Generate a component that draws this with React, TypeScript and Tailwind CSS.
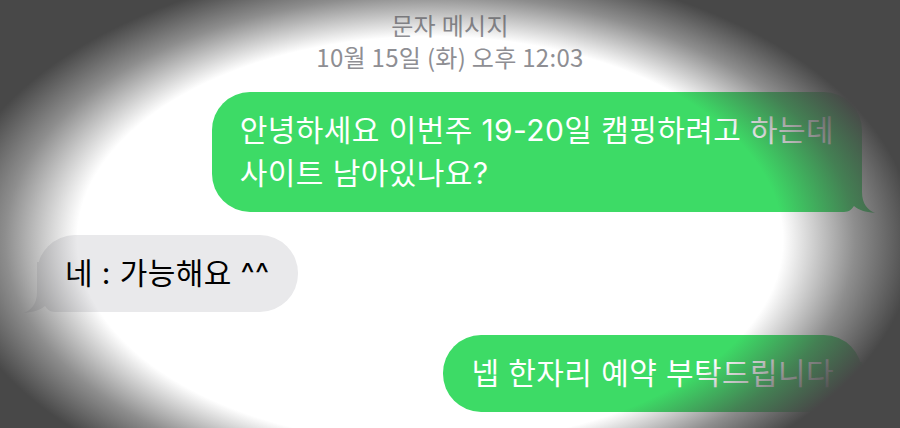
import React from 'react';

const FONT = "font-['Inter','Noto_Sans_CJK_KR',sans-serif]";

function Tail({ color, flip }: { color: string; flip?: boolean }) {
  return (
    <svg
      viewBox="0 0 52 52"
      className={`absolute bottom-[-2px] w-[52px] h-[52px] ${flip ? 'left-[-14px] -scale-x-100' : 'right-[-14px]'}`}
    >
      <path
        d="M0,50 L20,50 C25,50 28,47 30,44 C35,48 41,50 51,51 C44,48 38,42 38,30 L38,0 L0,0 Z"
        fill={color}
      />
    </svg>
  );
}

function Bubble({ mine, children }: { mine?: boolean; children: React.ReactNode }) {
  return (
    <div
      className={`relative rounded-[38px] px-[28px] py-[17px] text-[30px] leading-[43px] tracking-[0.4px] ${
        mine ? 'self-end mr-[38px] bg-[#3ddb66] text-white' : 'self-start ml-[37px] bg-[#e9e9eb] text-black'
      }`}
    >
      <Tail color={mine ? '#3ddb66' : '#e9e9eb'} flip={!mine} />
      <span className="relative">{children}</span>
    </div>
  );
}

export default function App() {
  return (
    <div className={`relative w-[900px] h-[428px] overflow-hidden bg-white ${FONT}`}>
      <div className="flex flex-col pt-[9px]">
        <div className="text-center text-[24px] leading-[32px] tracking-[0.3px] text-[#8e8e93] font-['Noto_Sans_CJK_KR',sans-serif]">
          <div>문자 메시지</div>
          <div>10월 15일 (화) 오후 12:03</div>
        </div>

        <div className="flex flex-col gap-[23px] mt-[19px]">
          <Bubble mine>
            안녕하세요 이번주 19-20일 캠핑하려고 하는데
            <br />
            사이트 남아있나요?
          </Bubble>
          <Bubble>네 : 가능해요 ^^</Bubble>
          <Bubble mine>넵 한자리 예약 부탁드립니다</Bubble>
        </div>
      </div>

      {/* vignette */}
      <div className="pointer-events-none absolute inset-0 bg-[radial-gradient(ellipse_425px_245px_at_430px_240px,rgba(72,72,72,0)_83%,rgba(72,72,72,0.62)_100%,rgba(72,72,72,1)_114%)]" />
    </div>
  );
}
